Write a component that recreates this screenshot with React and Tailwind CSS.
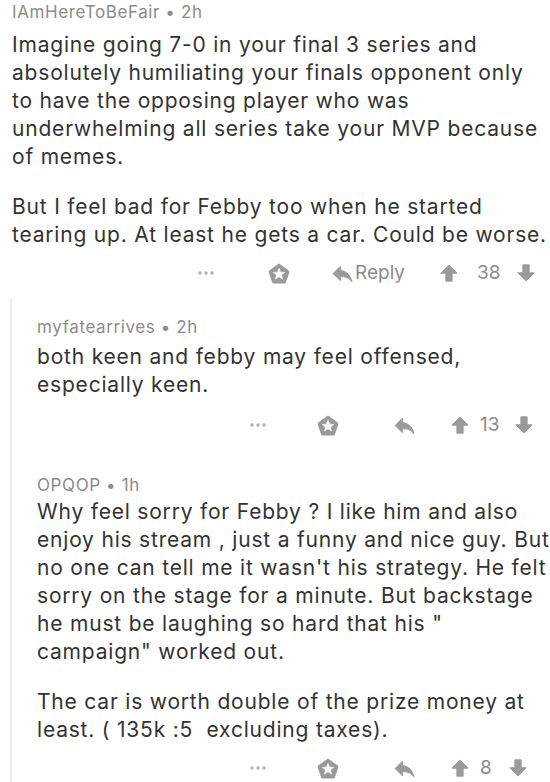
import React from "react";

const Dots = () => (
  <svg width="18" height="6" viewBox="0 0 18 6" className="shrink-0">
    <circle cx="3" cy="3" r="1.7" fill="#b0b0b0" />
    <circle cx="9" cy="3" r="1.7" fill="#b0b0b0" />
    <circle cx="15" cy="3" r="1.7" fill="#b0b0b0" />
  </svg>
);

const Star = () => (
  <svg width="22" height="21" viewBox="0 0 20 19" className="shrink-0">
    <path
      d="M10 1.2 L18.3 7.2 Q18.9 7.7 18.7 8.4 L15.6 17.3 Q15.3 18 14.6 18 L5.4 18 Q4.7 18 4.4 17.3 L1.3 8.4 Q1.1 7.7 1.7 7.2 Z"
      fill="#9a9a9a"
      stroke="#9a9a9a"
      strokeWidth="1.4"
      strokeLinejoin="round"
    />
    <path
      d="M10 4.8 L11.4 8.3 L15.1 8.5 L12.2 10.8 L13.2 14.5 L10 12.4 L6.8 14.5 L7.8 10.8 L4.9 8.5 L8.6 8.3 Z"
      fill="#fff"
      stroke="#fff"
      strokeWidth="0.6"
      strokeLinejoin="round"
    />
  </svg>
);

const ReplyIcon = () => (
  <svg width="21" height="19" viewBox="2 3 20 18" className="shrink-0">
    <path d="M10 9V5l-7 7 7 7v-4.1c5 0 8.5 1.6 11 5.1-1-5-4-10-11-11z" fill="#9a9a9a" stroke="#9a9a9a" strokeWidth="0.8" strokeLinejoin="round" />
  </svg>
);

const Up = () => (
  <svg width="18" height="18" viewBox="0 0 16 16" className="shrink-0">
    <path d="M8 0.8 L15.3 8.2 L10.8 8.2 L10.8 15.3 L5.2 15.3 L5.2 8.2 L0.7 8.2 Z" fill="#9a9a9a" strokeLinejoin="round" stroke="#9a9a9a" strokeWidth="0.8" />
  </svg>
);

const Down = () => (
  <svg width="18" height="18" viewBox="0 0 16 16" className="shrink-0">
    <path d="M8 15.2 L15.3 7.8 L10.8 7.8 L10.8 0.7 L5.2 0.7 L5.2 7.8 L0.7 7.8 Z" fill="#9a9a9a" strokeLinejoin="round" stroke="#9a9a9a" strokeWidth="0.8" />
  </svg>
);

const Lines = ({ lines }) => (
  <div>
    {lines.map((l, i) => (
      <div key={i} className="whitespace-pre h-[28px] leading-[28px]">
        {l}
      </div>
    ))}
  </div>
);

export default function App() {
  return (
    <div className="w-[550px] h-[782px] overflow-hidden bg-white text-[#333] font-['Inter',sans-serif]">
      {/* Comment 1 */}
      <div className="pl-[12px]">
        <div className="pt-[2px] h-[22px] text-[17px] leading-[20px] tracking-[0.6px] text-[#8c8c8c]">
          IAmHereToBeFair • 2h
        </div>
        <div className="mt-[9px] text-[21px] tracking-[0.8px]">
          <Lines
            lines={[
              "Imagine going 7-0 in your final 3 series and",
              "absolutely humiliating your finals opponent only",
              "to have the opposing player who was",
              "underwhelming all series take your MVP because",
              "of memes.",
            ]}
          />
          <div className="mt-[22px]">
            <Lines
              lines={[
                "But I feel bad for Febby too when he started",
                "tearing up. At least he gets a car. Could be worse.",
              ]}
            />
          </div>
        </div>
        <div className="mt-[12px] h-[24px] flex items-center pl-[185px] text-[19px] text-[#8c8c8c]">
          <Dots />
          <div className="ml-[53px]"><Star /></div>
          <div className="ml-[42px]"><ReplyIcon /></div>
          <span className="ml-[2px]">Reply</span>
          <div className="ml-[35px]"><Up /></div>
          <span className="ml-[19px]">38</span>
          <div className="ml-[16px]"><Down /></div>
        </div>
      </div>

      {/* Nested thread */}
      <div className="mt-[13px] ml-[10px] border-l-2 border-[#ededed] pl-[25px] h-[500px]">
        <div className="pt-[19px]">
          <div className="h-[20px] text-[17px] leading-[20px] tracking-[0.6px] text-[#8c8c8c]">
            myfatearrives • 2h
          </div>
          <div className="mt-[6px] text-[21px] tracking-[0.8px]">
            <Lines
              lines={[
                "both keen and febby may feel offensed,",
                "especially keen.",
              ]}
            />
          </div>
          <div className="mt-[14px] h-[24px] flex items-center pl-[212px] text-[19px] text-[#8c8c8c]">
            <Dots />
            <div className="ml-[50px]"><Star /></div>
            <div className="ml-[55px]"><ReplyIcon /></div>
            <div className="ml-[36px]"><Up /></div>
            <span className="ml-[11px]">13</span>
            <div className="ml-[16px]"><Down /></div>
          </div>
        </div>

        <div className="pt-[38px]">
          <div className="h-[20px] text-[17px] leading-[20px] tracking-[0.6px] text-[#8c8c8c]">
            OPQOP • 1h
          </div>
          <div className="mt-[3px] text-[21px] tracking-[0.8px]">
            <Lines
              lines={[
                "Why feel sorry for Febby ? I like him and also",
                "enjoy his stream , just a funny and nice guy. But",
                "no one can tell me it wasn't his strategy. He felt",
                "sorry on the stage for a minute. But backstage",
                "he must be laughing so hard that his \"",
                "campaign\" worked out.",
              ]}
            />
            <div className="mt-[22px]">
              <Lines
                lines={[
                  "The car is worth double of the prize money at",
                  "least. ( 135k :5  excluding taxes).",
                ]}
              />
            </div>
          </div>
          <div className="mt-[12px] h-[24px] flex items-center pl-[212px] text-[19px] text-[#8c8c8c]">
            <Dots />
            <div className="ml-[50px]"><Star /></div>
            <div className="ml-[55px]"><ReplyIcon /></div>
            <div className="ml-[36px]"><Up /></div>
            <span className="ml-[11px]">8</span>
            <div className="ml-[17px]"><Down /></div>
          </div>
        </div>
      </div>
    </div>
  );
}
